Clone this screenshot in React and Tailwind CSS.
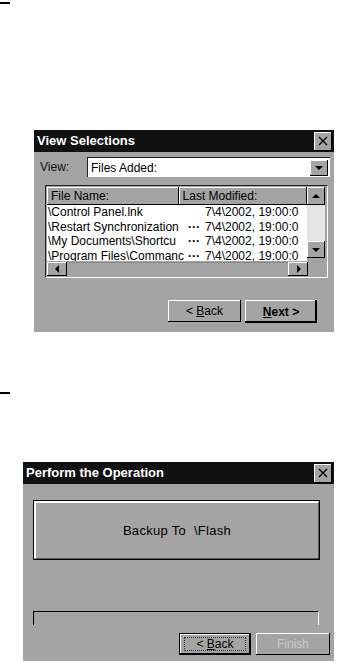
import React from 'react';

// 3D edges in the old Windows CE look
const raised = 'shadow-[inset_-1px_-1px_0_#000,inset_1px_1px_0_#fff]';
const raisedDefault = 'shadow-[inset_-2px_-2px_0_#000,inset_1px_1px_0_#fff]';

function CloseBox() {
  return (
    <div className={`w-[18px] h-[19px] bg-[#a4a4a4] ${raised} flex items-center justify-center`}>
      <svg width="10" height="10" viewBox="0 0 10 10">
        <path d="M1 1L9 9M9 1L1 9" stroke="#000" strokeWidth="1.3" />
      </svg>
    </div>
  );
}

function Arrow({ dir, size = 'w-[17px] h-[16px]' }) {
  const pts = {
    up: '1,6 9,6 5,2',
    down: '1,2 9,2 5,6',
    left: '5,1 5,9 1,5',
    right: '2,1 2,9 6,5',
  }[dir];
  const side = dir === 'left' || dir === 'right';
  return (
    <div className={`${size} bg-[#a4a4a4] ${raised} flex items-center justify-center shrink-0`}>
      <svg width={side ? 7 : 10} height={side ? 10 : 8} viewBox={side ? '0 0 7 10' : '0 0 10 8'}>
        <polygon points={pts} fill="#000" />
      </svg>
    </div>
  );
}

function TitleBar({ title }) {
  return (
    <div className="h-[22px] bg-[#111] flex items-center justify-between pl-[3px] pr-[2px]">
      <span className="text-white font-bold text-[13px]">{title}</span>
      <CloseBox />
    </div>
  );
}

// names are already cut where the column ends, as the list view shows them
const rows = [
  { name: '\\Control Panel.lnk', dots: false },
  { name: '\\Restart Synchronization', dots: true },
  { name: '\\My Documents\\Shortcu', dots: true },
  { name: '\\Program Files\\Commanc', dots: true },
];

function ViewSelections() {
  return (
    <div className="ml-[34px] mt-[126px] w-[300px] h-[202px] bg-[#a4a4a4] flex flex-col">
      <TitleBar title="View Selections" />
      <div className="flex items-center mt-[5px] h-[20px]">
        <span className="ml-[6px] w-[47px] text-[12px] text-[#111]">View:</span>
        <div className="w-[243px] h-[20px] bg-white border-t border-l border-[#222] flex items-center justify-between pr-[2px]">
          <span className="ml-[3px] text-[12px] text-black">Files Added:</span>
          <Arrow dir="down" size="w-[18px] h-[16px]" />
        </div>
      </div>

      {/* list view */}
      <div className="ml-[11px] mt-[8px] w-[283px] h-[93px] border-t border-l border-[#222] border-b border-r border-b-white border-r-white p-[1px] flex flex-col">
        <div className="flex h-[74px]">
          <div className="w-[261px] flex flex-col overflow-hidden">
            <div className="flex h-[18px] shrink-0">
              <div className={`w-[132px] ${raised} bg-[#a4a4a4] text-[12px] pl-[4px] leading-[18px]`}>File Name:</div>
              <div className={`w-[129px] ${raised} bg-[#a4a4a4] text-[12px] pl-[4px] leading-[18px]`}>Last Modified:</div>
            </div>
            <div className="bg-white flex-1 overflow-hidden">
              {rows.map((r) => (
                <div key={r.name} className="flex h-[14.5px] leading-[14.5px] text-[12px] text-black whitespace-nowrap">
                  <div className="w-[136px] pl-[1px]">{r.name}</div>
                  <div className="w-[22px] font-bold text-center">{r.dots ? '···' : ''}</div>
                  <div className="w-[98px] overflow-hidden">7\4\2002, 19:00:0</div>
                </div>
              ))}
            </div>
          </div>
          <div className="w-[19px] flex flex-col">
            <Arrow dir="up" size="w-[18px] h-[18px]" />
            <div className="w-[18px] h-[36px] bg-[#e4e4e4]" />
            <Arrow dir="down" size="w-[18px] h-[17px]" />
          </div>
        </div>
        <div className="flex h-[14px] mt-[1px]">
          <Arrow dir="left" size="w-[20px] h-[14px]" />
          <div className="w-[221px] h-[14px] bg-[#a4a4a4] border-t border-[#888]" />
          <Arrow dir="right" size="w-[20px] h-[14px]" />
        </div>
      </div>

      <div className="flex mt-[22px] ml-[134px] gap-[4px]">
        <button className={`w-[73px] h-[22px] ${raised} bg-[#a4a4a4] text-[12px] text-black`}>
          &lt; <span className="underline">B</span>ack
        </button>
        <button className={`w-[72px] h-[23px] ${raisedDefault} bg-[#a4a4a4] text-[12px] font-bold text-black`}>
          <span className="underline">N</span>ext &gt;
        </button>
      </div>
    </div>
  );
}

function PerformOperation() {
  return (
    <div className="ml-[23px] mt-[68px] w-[311px] h-[199px] bg-[#a4a4a4] flex flex-col">
      <TitleBar title="Perform the Operation" />
      <div className="ml-[10px] mt-[16px] w-[287px] h-[60px] border border-black">
        <div className="w-full h-full border-t-2 border-l-2 border-white border-r border-b border-r-[#555] border-b-[#555] flex items-center justify-center">
          <span className="text-[13px] text-black tracking-[0.3px]">Backup To&nbsp;&nbsp;\Flash</span>
        </div>
      </div>
      <div className="ml-[10px] mt-[51px] w-[286px] h-[14px] border-t border-l border-black border-r border-r-white" />
      <div className="flex mt-[8px] ml-[156px] gap-[5px]">
        <button className="w-[72px] h-[22px] border border-black bg-[#a4a4a4] flex items-center justify-center">
          <span className={`w-full h-full ${raised} flex items-center justify-center`}>
            <span className="border border-dotted border-[#333] px-[3px] w-[62px] h-[14px] leading-[12px] text-[12px] text-black">
              &lt; <span className="underline">B</span>ack
            </span>
          </span>
        </button>
        <button className={`w-[74px] h-[22px] ${raised} bg-[#a4a4a4] text-[12px] text-[#c8c8c8]`}>Finish</button>
      </div>
    </div>
  );
}

export default function App() {
  return (
    <div className="w-[338px] h-[663px] bg-white overflow-hidden flex flex-col font-['Liberation_Sans',Arial,sans-serif]">
      <div className="mt-[2px] w-[10px] h-[2px] bg-black" />
      <ViewSelections />
      <div className="mt-[60px] w-[10px] h-[2px] bg-black" />
      <PerformOperation />
    </div>
  );
}
